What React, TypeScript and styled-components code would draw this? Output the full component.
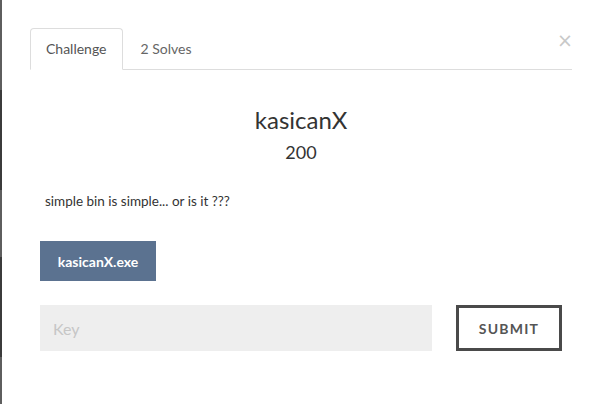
import React from "react";
import styled, { createGlobalStyle } from "styled-components";

const Global = createGlobalStyle`
  html, body { margin: 0; padding: 0; background: #fff; }
  body { font-family: Lato, "Open Sans", sans-serif; color: #333; }
  * { box-sizing: border-box; }
`;

const Page = styled.div`
  display: flex;
  width: 600px;
  height: 407px;
  overflow: hidden;
`;

const Backdrop = styled.div`
  width: 2px;
  flex: none;
  background: linear-gradient(
    to bottom,
    #5e5e5e 0px, #5e5e5e 90px,
    #3b3b3b 90px, #3b3b3b 190px,
    #5e5e5e 190px, #5e5e5e 257px,
    #3b3b3b 257px, #3b3b3b 357px,
    #5e5e5e 357px, #5e5e5e 404px,
    #fff 404px
  );
`;

const Modal = styled.div`
  position: relative;
  flex: 1;
  background: #fff;
  padding: 28px 28px 0 28px;
`;

const Close = styled.button`
  position: absolute;
  top: 30px;
  right: 27px;
  border: 0;
  background: transparent;
  padding: 0;
  font-family: "DejaVu Sans", sans-serif;
  font-size: 19px;
  line-height: 21px;
  color: #c8c8c8;
  cursor: pointer;
`;

const Tabs = styled.ul`
  display: flex;
  list-style: none;
  margin: 0;
  padding: 0;
  border-bottom: 1px solid #ddd;
`;

const Tab = styled.li<{ $active?: boolean }>`
  margin-right: 2px;
  margin-bottom: -1px;
  padding: 10px 15px;
  line-height: 20px;
  font-size: 14px;
  color: ${(p) => (p.$active ? "#555" : "#666")};
  border: 1px solid ${(p) => (p.$active ? "#ddd" : "transparent")};
  border-bottom-color: ${(p) => (p.$active ? "#fff" : "transparent")};
  border-radius: 4px 4px 0 0;
  background: ${(p) => (p.$active ? "#fff" : "transparent")};
`;

const Body = styled.div`
  padding: 0 10px;
`;

const Title = styled.h3`
  margin: 36px 0 0;
  text-align: center;
  font-size: 24px;
  font-weight: 400;
  line-height: 28px;
  color: #333;
`;

const Value = styled.h4`
  margin: 7px 0 0;
  text-align: center;
  font-size: 18px;
  font-weight: 400;
  line-height: 22px;
  color: #333;
`;

const Description = styled.p`
  margin: 29px 0 0;
  padding-left: 5px;
  font-size: 13.5px;
  line-height: 18px;
  color: #333;
`;

const FileButton = styled.a`
  display: inline-flex;
  align-items: center;
  justify-content: center;
  margin-top: 31px;
  width: 116px;
  height: 40px;
  background: #5b7290;
  color: #fff;
  font-size: 14px;
  font-weight: 700;
  text-decoration: none;
  letter-spacing: 0;
`;

const FormRow = styled.form`
  display: flex;
  gap: 24px;
  margin-top: 24px;
`;

const KeyInput = styled.input`
  width: 392px;
  height: 46px;
  border: 0;
  outline: none;
  background: #eee;
  padding: 0 13px;
  font-family: Lato, "Open Sans", sans-serif;
  font-size: 16px;
  color: #333;
  &::placeholder { color: #c6c6c6; }
`;

const Submit = styled.button`
  width: 106px;
  height: 46px;
  border: 3px solid #4a4a4a;
  background: #fff;
  font-family: Lato, "Open Sans", sans-serif;
  font-size: 14px;
  font-weight: 700;
  letter-spacing: 1.2px;
  color: #555;
  cursor: pointer;
`;

export default function App() {
  return (
    <>
      <Global />
      <Page>
        <Backdrop />
        <Modal>
          <Close aria-label="Close">×</Close>
          <Tabs>
            <Tab $active>Challenge</Tab>
            <Tab>2 Solves</Tab>
          </Tabs>
          <Body>
            <Title>kasicanX</Title>
            <Value>200</Value>
            <Description>simple bin is simple... or is it ???</Description>
            <FileButton href="#">kasicanX.exe</FileButton>
            <FormRow onSubmit={(e) => e.preventDefault()}>
              <KeyInput placeholder="Key" />
              <Submit type="submit">SUBMIT</Submit>
            </FormRow>
          </Body>
        </Modal>
      </Page>
    </>
  );
}
